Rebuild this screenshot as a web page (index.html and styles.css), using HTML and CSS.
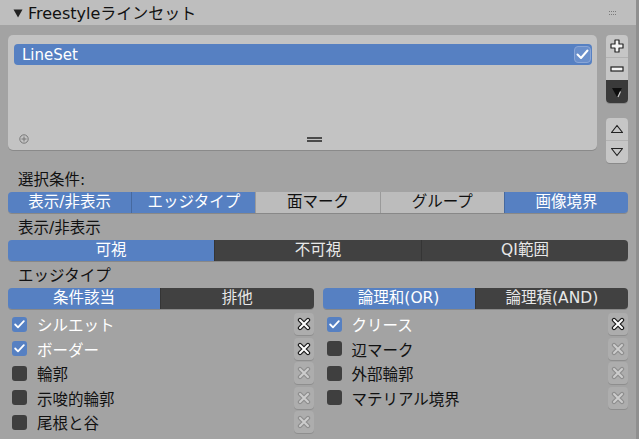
FILE: index.html
```html
<!DOCTYPE html>
<html lang="ja">
<head>
  <meta charset="UTF-8">
  <title>Freestyleラインセット</title>
  <link rel="stylesheet" href="styles.css">
</head>
<body>
  <div class="panel">
    <div class="panel-header">
      <svg class="arrow" width="10" height="9" viewBox="0 0 10 9"><polygon points="0.5,0.5 9.5,0.5 5,8.5" fill="#222"/></svg>
      <span class="title">Freestyleラインセット</span>
      <svg class="grip-dots" width="9" height="5" viewBox="0 0 9 5">
        <g fill="#7a7a7a">
          <rect x="0" y="0" width="1" height="1"/><rect x="2" y="0" width="1" height="1"/><rect x="4" y="0" width="1" height="1"/><rect x="6" y="0" width="1" height="1"/>
          <rect x="0" y="3" width="1" height="1"/><rect x="2" y="3" width="1" height="1"/><rect x="4" y="3" width="1" height="1"/><rect x="6" y="3" width="1" height="1"/>
        </g>
      </svg>
    </div>

    <div class="panel-body">
      <!-- ラインセット一覧 -->
      <div class="list-row">
        <div class="list-box">
          <div class="list-item">
            <span>LineSet</span>
            <span class="item-check">
              <svg width="13" height="11" viewBox="0 0 13 11"><polyline points="1.5,5.5 5,9 11.5,1.5" fill="none" stroke="#fff" stroke-width="2" stroke-linecap="round" stroke-linejoin="round"/></svg>
            </span>
          </div>
          <div class="list-footer">
            <svg class="add-circle" width="10" height="10" viewBox="0 0 10 10"><circle cx="5" cy="5" r="4.2" fill="none" stroke="#777" stroke-width="1"/><path d="M5 2.5V7.5M2.5 5H7.5" stroke="#777" stroke-width="1"/></svg>
            <span class="resize-grip"></span>
          </div>
        </div>
        <div class="side">
          <div class="side-group">
            <div class="side-btn">
              <svg width="14" height="14" viewBox="0 0 14 14"><polygon points="5,1 9,1 9,5 13,5 13,9 9,9 9,13 5,13 5,9 1,9 1,5 5,5" fill="#f4f4f4" stroke="#222" stroke-width="1.2" stroke-linejoin="round"/></svg>
            </div>
            <div class="side-btn">
              <svg width="14" height="6" viewBox="0 0 14 6"><rect x="1" y="1" width="12" height="4" fill="#f4f4f4" stroke="#222" stroke-width="1.2"/></svg>
            </div>
            <div class="side-btn dark">
              <svg width="12" height="11" viewBox="0 0 12 11"><polygon points="1,1 11,1 6,10" fill="#0e0e0e"/><path d="M9.5 4.5L7 10" stroke="#cfcfcf" stroke-width="1.1"/></svg>
            </div>
          </div>
          <div class="side-group">
            <div class="side-btn">
              <svg width="14" height="10" viewBox="0 0 14 10"><polygon points="7,1.5 12.5,8.5 1.5,8.5" fill="none" stroke="#222" stroke-width="1.2" stroke-linejoin="round"/></svg>
            </div>
            <div class="side-btn">
              <svg width="14" height="10" viewBox="0 0 14 10"><polygon points="1.5,1.5 12.5,1.5 7,8.5" fill="none" stroke="#222" stroke-width="1.2" stroke-linejoin="round"/></svg>
            </div>
          </div>
        </div>
      </div>

      <div class="label">選択条件:</div>
      <div class="seg">
        <div class="btn on">表示/非表示</div>
        <div class="btn on">エッジタイプ</div>
        <div class="btn light">面マーク</div>
        <div class="btn light">グループ</div>
        <div class="btn on">画像境界</div>
      </div>

      <div class="label">表示/非表示</div>
      <div class="seg">
        <div class="btn on">可視</div>
        <div class="btn dark">不可視</div>
        <div class="btn dark">QI範囲</div>
      </div>

      <div class="label">エッジタイプ</div>
      <div class="two-col">
        <div class="seg">
          <div class="btn on">条件該当</div>
          <div class="btn dark">排他</div>
        </div>
        <div class="seg">
          <div class="btn on">論理和(OR)</div>
          <div class="btn dark">論理積(AND)</div>
        </div>
      </div>

      <div class="two-col checks">
        <div class="check-col">
          <div class="check-row checked">
            <span class="box"><svg width="11" height="9" viewBox="0 0 11 9"><polyline points="1.2,4.5 4,7.3 9.8,1.2" fill="none" stroke="#fff" stroke-width="1.8" stroke-linecap="round" stroke-linejoin="round"/></svg></span>
            <span class="text">シルエット</span>
            <span class="x-btn active"><svg width="14" height="14" viewBox="0 0 14 14"><path d="M3 3L11 11M11 3L3 11" stroke="#1c1c1c" stroke-width="4.4" stroke-linecap="round"/><path d="M3 3L11 11M11 3L3 11" stroke="#fff" stroke-width="2" stroke-linecap="round"/></svg></span>
          </div>
          <div class="check-row checked">
            <span class="box"><svg width="11" height="9" viewBox="0 0 11 9"><polyline points="1.2,4.5 4,7.3 9.8,1.2" fill="none" stroke="#fff" stroke-width="1.8" stroke-linecap="round" stroke-linejoin="round"/></svg></span>
            <span class="text">ボーダー</span>
            <span class="x-btn active"><svg width="14" height="14" viewBox="0 0 14 14"><path d="M3 3L11 11M11 3L3 11" stroke="#1c1c1c" stroke-width="4.4" stroke-linecap="round"/><path d="M3 3L11 11M11 3L3 11" stroke="#fff" stroke-width="2" stroke-linecap="round"/></svg></span>
          </div>
          <div class="check-row">
            <span class="box"></span>
            <span class="text">輪郭</span>
            <span class="x-btn"><svg width="14" height="14" viewBox="0 0 14 14"><path d="M3 3L11 11M11 3L3 11" stroke="#8e8e8e" stroke-width="4.4" stroke-linecap="round"/><path d="M3 3L11 11M11 3L3 11" stroke="#cdcdcd" stroke-width="2" stroke-linecap="round"/></svg></span>
          </div>
          <div class="check-row">
            <span class="box"></span>
            <span class="text">示唆的輪郭</span>
            <span class="x-btn"><svg width="14" height="14" viewBox="0 0 14 14"><path d="M3 3L11 11M11 3L3 11" stroke="#8e8e8e" stroke-width="4.4" stroke-linecap="round"/><path d="M3 3L11 11M11 3L3 11" stroke="#cdcdcd" stroke-width="2" stroke-linecap="round"/></svg></span>
          </div>
          <div class="check-row">
            <span class="box"></span>
            <span class="text">尾根と谷</span>
            <span class="x-btn"><svg width="14" height="14" viewBox="0 0 14 14"><path d="M3 3L11 11M11 3L3 11" stroke="#8e8e8e" stroke-width="4.4" stroke-linecap="round"/><path d="M3 3L11 11M11 3L3 11" stroke="#cdcdcd" stroke-width="2" stroke-linecap="round"/></svg></span>
          </div>
        </div>
        <div class="check-col">
          <div class="check-row checked">
            <span class="box"><svg width="11" height="9" viewBox="0 0 11 9"><polyline points="1.2,4.5 4,7.3 9.8,1.2" fill="none" stroke="#fff" stroke-width="1.8" stroke-linecap="round" stroke-linejoin="round"/></svg></span>
            <span class="text">クリース</span>
            <span class="x-btn active"><svg width="14" height="14" viewBox="0 0 14 14"><path d="M3 3L11 11M11 3L3 11" stroke="#1c1c1c" stroke-width="4.4" stroke-linecap="round"/><path d="M3 3L11 11M11 3L3 11" stroke="#fff" stroke-width="2" stroke-linecap="round"/></svg></span>
          </div>
          <div class="check-row">
            <span class="box"></span>
            <span class="text">辺マーク</span>
            <span class="x-btn"><svg width="14" height="14" viewBox="0 0 14 14"><path d="M3 3L11 11M11 3L3 11" stroke="#8e8e8e" stroke-width="4.4" stroke-linecap="round"/><path d="M3 3L11 11M11 3L3 11" stroke="#cdcdcd" stroke-width="2" stroke-linecap="round"/></svg></span>
          </div>
          <div class="check-row">
            <span class="box"></span>
            <span class="text">外部輪郭</span>
            <span class="x-btn"><svg width="14" height="14" viewBox="0 0 14 14"><path d="M3 3L11 11M11 3L3 11" stroke="#8e8e8e" stroke-width="4.4" stroke-linecap="round"/><path d="M3 3L11 11M11 3L3 11" stroke="#cdcdcd" stroke-width="2" stroke-linecap="round"/></svg></span>
          </div>
          <div class="check-row">
            <span class="box"></span>
            <span class="text">マテリアル境界</span>
            <span class="x-btn"><svg width="14" height="14" viewBox="0 0 14 14"><path d="M3 3L11 11M11 3L3 11" stroke="#8e8e8e" stroke-width="4.4" stroke-linecap="round"/><path d="M3 3L11 11M11 3L3 11" stroke="#cdcdcd" stroke-width="2" stroke-linecap="round"/></svg></span>
          </div>
        </div>
      </div>
    </div>
  </div>
</body>
</html>
```

FILE: styles.css
```css
body {
  margin: 0;
  width: 639px;
  height: 439px;
  overflow: hidden;
  background: #a3a3a3;
  font-family: "DejaVu Sans", "Noto Sans CJK JP", sans-serif;
  font-size: 15.5px;
  color: #111;
}
.panel {
  height: 439px;
  box-sizing: border-box;
  border-right: 3px solid #8f8f8f;
}
.panel-header {
  height: 25px;
  box-sizing: border-box;
  padding: 2px 18px 0 13px;
  background: #bebebe;
  display: flex;
  align-items: center;
}
.arrow {
  margin-right: 5px;
}
.title {
  flex: 1;
  font-size: 16px;
  line-height: 23px;
}
.panel-body {
  padding: 10px 8px 0 8px;
}

/* リスト */
.list-row {
  display: flex;
  gap: 9px;
  height: 130px;
}
.list-box {
  flex: 1;
  height: 115px;
  box-sizing: border-box;
  background: #c3c3c3;
  border-radius: 5px;
  box-shadow: 0 1px 0 #8a8a8a;
  padding: 9px 5px 0 6px;
  display: flex;
  flex-direction: column;
}
.list-item {
  height: 21px;
  background: #5680c2;
  border-radius: 4px;
  color: #fff;
  font-size: 15px;
  display: flex;
  align-items: center;
  justify-content: space-between;
  padding: 0 1px 0 8px;
}
.item-check {
  width: 17px;
  height: 17px;
  box-sizing: border-box;
  border: 1px solid #8aa6d6;
  background: #6a8fcb;
  border-radius: 4px;
  display: flex;
  align-items: center;
  justify-content: center;
}
.list-footer {
  margin-top: auto;
  height: 22px;
  display: flex;
  align-items: center;
}
.add-circle {
  margin-left: 5px;
}
.resize-grip {
  margin-left: 278px;
  width: 15px;
  height: 5px;
  border-top: 2px solid #4a4a4a;
  border-bottom: 2px solid #4a4a4a;
  box-sizing: border-box;
}
.side {
  width: 22px;
  display: flex;
  flex-direction: column;
  gap: 15px;
}
.side-group {
  background: #c6c6c6;
  border-radius: 4px;
  overflow: hidden;
  box-shadow: 0 1px 0 #8a8a8a;
  display: flex;
  flex-direction: column;
}
.side-btn {
  height: 22px;
  display: flex;
  align-items: center;
  justify-content: center;
}
.side-btn + .side-btn {
  border-top: 1px solid #b2b2b2;
}
.side-btn.dark {
  background: #3a3a3a;
  border-top-color: #3a3a3a;
}

/* ラベルとボタン列 */
.label {
  height: 27px;
  box-sizing: border-box;
  padding: 3px 0 0 10px;
  line-height: 24px;
}
.seg {
  display: flex;
  height: 21px;
  border-radius: 4px;
  overflow: hidden;
  box-shadow: 0 1px 0 #888;
}
.btn {
  flex: 1;
  text-align: center;
  line-height: 21px;
  white-space: nowrap;
}
.btn + .btn {
  border-left: 1px solid rgba(0, 0, 0, 0.18);
}
.btn.on {
  background: #5680c2;
  color: #fff;
}
.btn.light {
  background: #bcbcbc;
  color: #111;
}
.btn.dark {
  background: #414141;
  color: #e8e8e8;
}
.two-col {
  display: grid;
  grid-template-columns: 1fr 1fr;
  column-gap: 9px;
}

/* チェックボックス */
.checks {
  margin-top: 3px;
}
.check-row {
  height: 24.5px;
  display: flex;
  align-items: center;
  padding-left: 4px;
}
.box {
  width: 15px;
  height: 15px;
  border-radius: 3px;
  background: #3f3f3f;
  margin-right: 10px;
  display: flex;
  align-items: center;
  justify-content: center;
}
.check-row.checked .box {
  background: #5680c2;
}
.check-row.checked .text {
  color: #fff;
}
.x-btn {
  margin-left: auto;
  width: 20px;
  height: 22px;
  border-radius: 4px;
  background: #adadad;
  box-shadow: 0 1px 0 #8e8e8e;
  display: flex;
  align-items: center;
  justify-content: center;
}
```
